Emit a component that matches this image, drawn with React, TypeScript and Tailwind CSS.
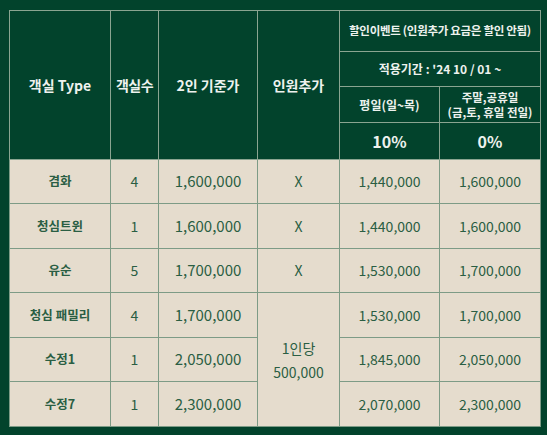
const rows = [
  { name: "겸화", count: "4", base: "1,600,000", extra: "X", weekday: "1,440,000", weekend: "1,600,000" },
  { name: "청심트윈", count: "1", base: "1,600,000", extra: "X", weekday: "1,440,000", weekend: "1,600,000" },
  { name: "유순", count: "5", base: "1,700,000", extra: "X", weekday: "1,530,000", weekend: "1,700,000" },
  { name: "청심 패밀리", count: "4", base: "1,700,000", extra: "per", weekday: "1,530,000", weekend: "1,700,000" },
  { name: "수정1", count: "1", base: "2,050,000", extra: "", weekday: "1,845,000", weekend: "2,050,000" },
  { name: "수정7", count: "1", base: "2,300,000", extra: "", weekday: "2,070,000", weekend: "2,300,000" },
];

const th = "border border-[#8aa591] text-center align-middle font-bold text-[#eef2ee]";
const td = "border border-[#7d9b86] text-center align-middle text-[#2a5e43]";

export default function App() {
  return (
    <div
      className="h-[435px] w-[547px] bg-[#02432c] pl-[9px] pt-[10px]"
      style={{ fontFamily: '"Noto Sans CJK KR", "Noto Sans", sans-serif' }}
    >
      <table className="w-[531px] table-fixed border-collapse">
        <colgroup>
          <col className="w-[101px]" />
          <col className="w-[48px]" />
          <col className="w-[99px]" />
          <col className="w-[82px]" />
          <col className="w-[100px]" />
          <col className="w-[101px]" />
        </colgroup>
        <thead>
          <tr className="h-[41px]">
            <th rowSpan={4} className={`${th} text-[14px]`}>객실 Type</th>
            <th rowSpan={4} className={`${th} text-[14px] tracking-[-0.5px]`}>객실수</th>
            <th rowSpan={4} className={`${th} text-[14px]`}>2인 기준가</th>
            <th rowSpan={4} className={`${th} text-[14px]`}>인원추가</th>
            <th colSpan={2} className={`${th} text-[11.5px] font-semibold tracking-[-0.3px]`}>
              할인이벤트 (인원추가 요금은 할인 안됨)
            </th>
          </tr>
          <tr className="h-[35px]">
            <th colSpan={2} className={`${th} text-[12px] font-semibold`}>적용기간 : '24 10 / 01 ~</th>
          </tr>
          <tr className="h-[36px]">
            <th className={`${th} text-[12px] font-semibold`}>평일(일~목)</th>
            <th className={`${th} text-[11.5px] font-semibold leading-[15px]`}>
              주말,공휴일
              <br />
              (금,토, 휴일 전일)
            </th>
          </tr>
          <tr className="h-[37px]">
            <th className={`${th} text-[16px]`}>10%</th>
            <th className={`${th} text-[16px]`}>0%</th>
          </tr>
        </thead>
        <tbody className="bg-[#e5dccd]">
          {rows.map((r, i) => (
            <tr key={r.name} className={i % 2 === 0 ? "h-[44px]" : "h-[45px]"}>
              <td className={`${td} text-[12.5px] font-bold`}>{r.name}</td>
              <td className={`${td} text-[14px]`}>{r.count}</td>
              <td className={`${td} text-[15px]`}>{r.base}</td>
              {r.extra === "per" ? (
                <td rowSpan={3} className={`${td} text-[14px] leading-[24px]`}>
                  1인당
                  <br />
                  500,000
                </td>
              ) : r.extra === "X" ? (
                <td className={`${td} text-[14px]`}>X</td>
              ) : null}
              <td className={`${td} text-[14px]`}>{r.weekday}</td>
              <td className={`${td} text-[14px]`}>{r.weekend}</td>
            </tr>
          ))}
        </tbody>
      </table>
    </div>
  );
}
